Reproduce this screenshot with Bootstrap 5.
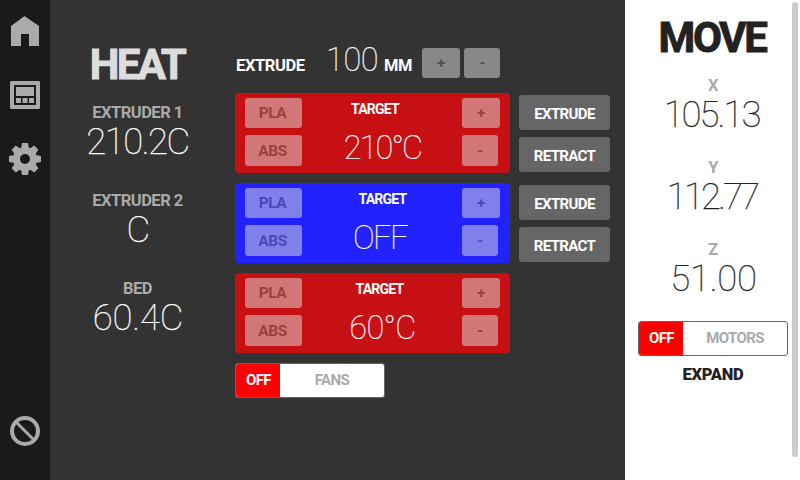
<!DOCTYPE html>
<html lang="en">
<head>
<meta charset="utf-8">
<meta name="viewport" content="width=device-width, initial-scale=1">
<title>Printer control</title>
<link href="https://cdn.jsdelivr.net/npm/bootstrap@5.3.0/dist/css/bootstrap.min.css" rel="stylesheet">
<style>
body{width:800px;height:480px;overflow:hidden;background:#333;font-family:Roboto,"Liberation Sans",sans-serif;font-weight:700;color:#fff;white-space:nowrap}
.rail{width:50px;background:#1a1a1a;padding:14px 0 33px;gap:33px}
.rail svg{display:block;fill:#aaa}
.temps{width:175px;padding-top:41px}
.controls{width:400px;padding:43px 0 0 10px}
.axes{width:175px;padding:14px 12px 0 13px;background:#fff;color:#222}
.title{font-size:42px;line-height:48px;font-weight:700;letter-spacing:-2.6px;color:#ddd;-webkit-text-stroke:.9px currentColor;padding-right:1px}
.axes .title{color:#222;letter-spacing:-2.3px;padding-right:2px}
.tag{font-size:16.5px;line-height:24px;color:#aaa;letter-spacing:-.5px}
.value{font-size:36.5px;line-height:34px;font-weight:100;letter-spacing:-1.5px;-webkit-text-stroke:.25px currentColor}
.value.tight{letter-spacing:-2px;padding-right:3px}
.value.tighter{letter-spacing:-2.900px;padding-right:2px}
.value.loose{letter-spacing:-.2px;padding-left:1px}
.reading{height:88px;padding-top:12px}
.axis{height:82px;padding-top:12px}
.amount{height:40px;width:265px;padding-left:1px}
.amount .cap{font-size:16.5px;line-height:20px;letter-spacing:-.4px;width:90px;padding-top:13px}
.amount .num{font-size:32.5px;line-height:34px;font-weight:100;letter-spacing:-.4px;width:58px;-webkit-text-stroke:.2px currentColor}
.amount .unit{width:38px}
.steps{gap:4px;padding-top:5px}
.stack{gap:10px;margin-top:10px}
.pair{gap:9px}
.moves{gap:7px;padding-top:2px}
.heater{width:275px;height:80px;border-radius:4px;padding:5px 10px 7px}
.hot{background:#c61013}
.cold{background:#2222ff}
.soft{border:0;border-radius:3px;padding:0;height:30px;background:#ddd;color:#707070;opacity:.5;font-size:15.5px;line-height:28px;font-weight:700;letter-spacing:-.4px;text-align:center}
.soft.tall{height:31px;line-height:30px}
.preset{width:57px;padding-right:2px}
.inc{width:38px}
.dec{width:36px}
.goal{font-size:14px;line-height:20px;letter-spacing:-.8px;padding-top:1px}
.goalnum{font-size:32.5px;line-height:34px;font-weight:100;letter-spacing:-.7px;margin-top:12px;padding-left:1px;-webkit-text-stroke:.2px currentColor}
.wide-num{letter-spacing:-1.9px}
.off-num{letter-spacing:-1.6px;padding:0 4px 0 0}
.shift-a{padding-right:14px}
.shift-b{padding-left:1px}
.shift-c{padding-right:5px}
.solid{width:91px;height:35px;border:0;border-radius:3px;padding:2px 0 0;background:#666;color:#fff;font-size:15px;line-height:35px;font-weight:700;letter-spacing:-.65px}
.switch{width:150px;height:35px;border:1px solid #666;border-radius:3px;background:#fff;font-size:15px;line-height:33px;overflow:hidden;letter-spacing:-.6px}
.switch .state{width:44px;padding-left:1px;background:#f00;color:#fff}
.switch .what{color:#aaa}
.axes .switch{margin-top:13px}
.expand{font-size:16.5px;line-height:20px;font-weight:900;letter-spacing:-.3px;margin-top:9px}
.thumb{right:2px;top:2px;width:6px;height:455px;border-radius:3px;background:#ccc}
</style>
</head>
<body class="d-flex position-relative">
<nav class="rail d-flex flex-column align-items-center flex-shrink-0">
  <svg width="30" height="34" viewBox="0 0 30 34"><path d="M1 12 14.500 2 29 12v20H19V20h-8v12H1z"/></svg>
  <svg width="30" height="28" viewBox="0 0 30 28"><path fill-rule="evenodd" d="M1 0h28l1 1v26l-1 1H1l-1-1V1zM4 4v20h22V4zM6 6h18v9H6zM6 17h5v5H6zM12.500 17h5v5h-5zM19 17h5v5h-5z"/></svg>
  <svg width="34" height="34" viewBox="-17 -17 34 34"><path d="M-3-16h6l1 6h-8zM-3 16h6l1-6h-8zM-16-3v6l6 1v-8zM16-3v6l-6 1v-8z"/><path transform="rotate(45)" d="M-3-16h6l1 6h-8zM-3 16h6l1-6h-8zM-16-3v6l6 1v-8zM16-3v6l-6 1v-8z"/><circle r="8.500" fill="none" stroke="#aaa" stroke-width="7"/></svg>
  <svg class="mt-auto" width="32" height="32" viewBox="-16 -16 32 32"><circle r="13" fill="none" stroke="#aaa" stroke-width="4"/><path d="M-9-9 9 9" stroke="#aaa" stroke-width="3"/></svg>
</nav>
<section class="temps text-center flex-shrink-0">
  <div class="title">HEAT</div>
  <div class="reading"><div class="tag">EXTRUDER 1</div><div class="value">210.2C</div></div>
  <div class="reading"><div class="tag">EXTRUDER 2</div><div class="value">C</div></div>
  <div class="reading"><div class="tag">BED</div><div class="value loose">60.4C</div></div>
</section>
<main class="controls flex-shrink-0">
  <div class="amount d-flex align-items-start">
    <div class="cap">EXTRUDE</div><div class="num">100</div><div class="cap unit">MM</div>
    <div class="steps d-flex align-items-start"><button class="soft inc">+</button><button class="soft dec">-</button></div>
  </div>
  <div class="stack d-flex flex-column">
    <div class="pair d-flex">
      <div class="heater hot d-flex justify-content-between">
        <div class="d-flex flex-column justify-content-between"><button class="soft preset">PLA</button><button class="soft tall preset">ABS</button></div>
        <div class="text-center"><div class="goal shift-a">TARGET</div><div class="goalnum wide-num">210°C</div></div>
        <div class="d-flex flex-column justify-content-between"><button class="soft inc">+</button><button class="soft tall dec">-</button></div>
      </div>
      <div class="moves d-flex flex-column"><button class="solid">EXTRUDE</button><button class="solid">RETRACT</button></div>
    </div>
    <div class="pair d-flex">
      <div class="heater cold d-flex justify-content-between">
        <div class="d-flex flex-column justify-content-between"><button class="soft preset">PLA</button><button class="soft tall preset">ABS</button></div>
        <div class="text-center"><div class="goal shift-b">TARGET</div><div class="goalnum off-num">OFF</div></div>
        <div class="d-flex flex-column justify-content-between"><button class="soft inc">+</button><button class="soft tall dec">-</button></div>
      </div>
      <div class="moves d-flex flex-column"><button class="solid">EXTRUDE</button><button class="solid">RETRACT</button></div>
    </div>
    <div class="heater hot d-flex justify-content-between">
      <div class="d-flex flex-column justify-content-between"><button class="soft preset">PLA</button><button class="soft tall preset">ABS</button></div>
      <div class="text-center"><div class="goal shift-c">TARGET</div><div class="goalnum">60°C</div></div>
      <div class="d-flex flex-column justify-content-between"><button class="soft inc">+</button><button class="soft tall dec">-</button></div>
    </div>
    <div class="switch d-flex text-center"><div class="state">OFF</div><div class="what flex-fill">FANS</div></div>
  </div>
</main>
<aside class="axes text-center flex-shrink-0">
  <div class="title">MOVE</div>
  <div class="axis"><div class="tag">X</div><div class="value tight">105.13</div></div>
  <div class="axis"><div class="tag">Y</div><div class="value tighter">112.77</div></div>
  <div class="axis"><div class="tag">Z</div><div class="value loose">51.00</div></div>
  <div class="switch d-flex text-center"><div class="state">OFF</div><div class="what flex-fill">MOTORS</div></div>
  <div class="expand">EXPAND</div>
</aside>
<div class="thumb position-absolute"></div>
<script src="https://cdn.jsdelivr.net/npm/bootstrap@5.3.0/dist/js/bootstrap.bundle.min.js"></script>
</body>
</html>
